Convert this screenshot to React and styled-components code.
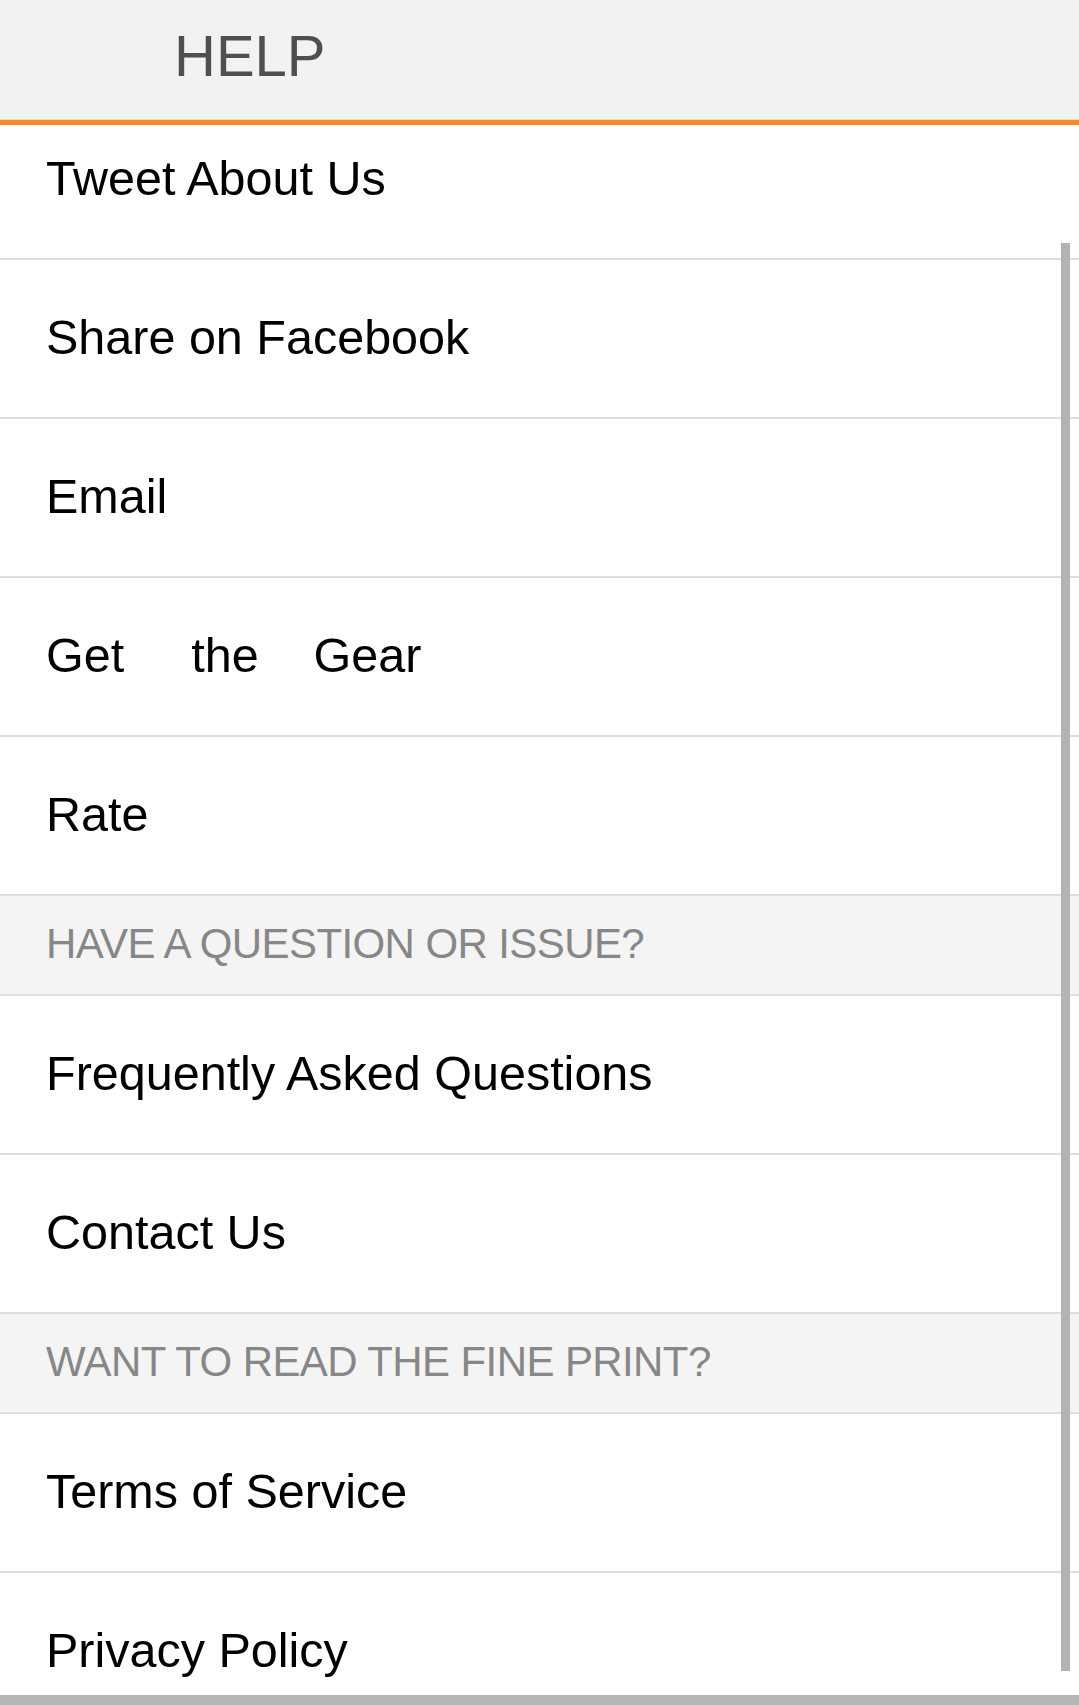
import React from "react";
import styled, { createGlobalStyle } from "styled-components";

const Global = createGlobalStyle`
  html, body { margin: 0; padding: 0; background: #ffffff; }
  body { font-family: "Liberation Sans", Arial, Helvetica, sans-serif; -webkit-font-smoothing: antialiased; }
  #root { width: 1079px; height: 1705px; overflow: hidden; }
`;

const Page = styled.div`
  display: flex;
  flex-direction: column;
  width: 1079px;
  height: 1705px;
  background: #ffffff;
`;

const Header = styled.header`
  box-sizing: border-box;
  height: 125px;
  flex: none;
  background: #f2f2f2;
  border-bottom: 5px solid #f68b1f;
  box-shadow: inset 0 -1px 0 #f1dcc8;
  padding: 22px 0 0 174px;
`;

const Title = styled.h1`
  margin: 0;
  font-family: "Liberation Sans", Arial, sans-serif;
  font-weight: 400;
  font-size: 58px;
  line-height: normal;
  color: #4f4f4f;
`;

const Viewport = styled.div`
  position: relative;
  flex: 1;
  overflow: hidden;
`;

const List = styled.ul`
  list-style: none;
  margin: -24px 0 0 0;
  padding: 0;
`;

const Row = styled.li`
  box-sizing: border-box;
  height: 159px;
  display: flex;
  align-items: center;
  padding: 0 0 4px 46px;
  border-bottom: 2px solid #dedede;
  background: #ffffff;
  font-size: 48.5px;
  color: #000000;
  white-space: pre;
`;

const Word = styled.span`
  margin-left: ${(p) => p.$gap || 0}px;
`;

const Section = styled.li`
  box-sizing: border-box;
  height: 100px;
  display: flex;
  align-items: center;
  padding: 0 0 2px 46px;
  border-bottom: 2px solid #dedede;
  background: #f4f4f4;
  font-size: 42px;
  letter-spacing: -0.6px;
  color: #878787;
  text-transform: uppercase;
`;

const ScrollThumb = styled.div`
  position: absolute;
  left: 1061px;
  top: 118px;
  width: 9px;
  height: 1428px;
  background: #b3b3b3;
`;

const BottomBar = styled.div`
  flex: none;
  height: 10px;
  background: #b5b5b5;
`;

const items = [
  { type: "row", label: "Tweet About Us" },
  { type: "row", label: "Share on Facebook" },
  { type: "row", label: "Email" },
  { type: "gear" },
  { type: "row", label: "Rate" },
  { type: "section", label: "Have a question or issue?" },
  { type: "row", label: "Frequently Asked Questions" },
  { type: "row", label: "Contact Us" },
  { type: "section", label: "Want to read the fine print?" },
  { type: "row", label: "Terms of Service" },
  { type: "row", label: "Privacy Policy" },
];

export default function App() {
  return (
    <>
      <Global />
      <Page>
        <Header>
          <Title>HELP</Title>
        </Header>
        <Viewport>
          <List>
            {items.map((it, i) => {
              if (it.type === "section") return <Section key={i}>{it.label}</Section>;
              if (it.type === "gear")
                return (
                  <Row key={i}>
                    <Word>Get</Word>
                    <Word $gap={67}>the</Word>
                    <Word $gap={55}>Gear</Word>
                  </Row>
                );
              return <Row key={i}>{it.label}</Row>;
            })}
          </List>
          <ScrollThumb />
        </Viewport>
        <BottomBar />
      </Page>
    </>
  );
}
